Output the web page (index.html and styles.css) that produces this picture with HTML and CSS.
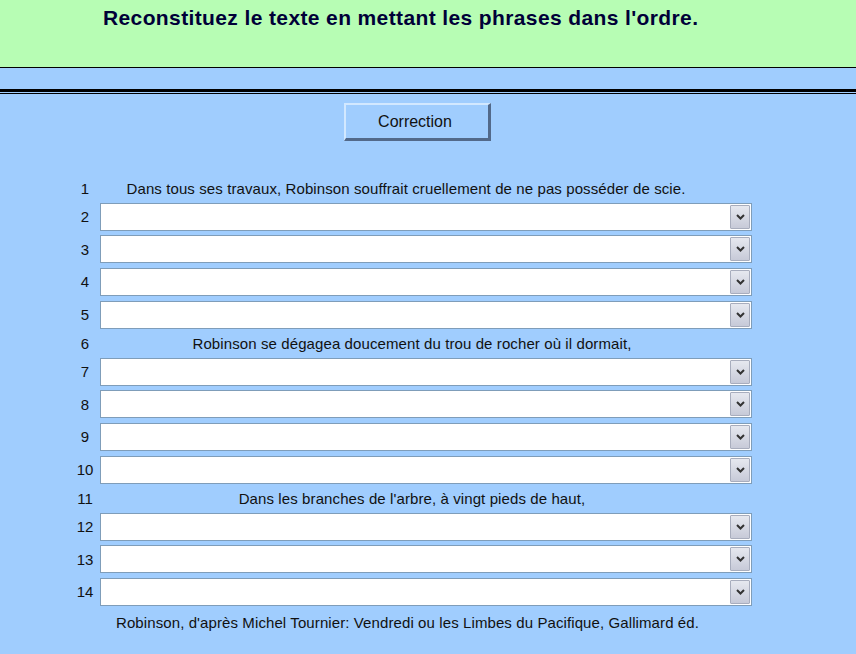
FILE: index.html
```html
<!DOCTYPE html>
<html lang="fr">
<head>
<meta charset="utf-8">
<title>Reconstituez le texte</title>
<link rel="stylesheet" href="styles.css">
</head>
<body>
<header class="top">
  <h1 class="title">Reconstituez le texte en mettant les phrases dans l'ordre.</h1>
</header>
<div class="band"></div>
<div class="double-rule"></div>
<div class="actions">
  <button class="btn" type="button">Correction</button>
</div>
<main class="rows">
  <div class="row txt"><span class="num">1</span><span class="phrase p1">Dans tous ses travaux, Robinson souffrait cruellement de ne pas posséder de scie.</span></div>
  <div class="row sel"><span class="num">2</span><div class="combo"><span class="arrow"><svg width="9" height="6" viewBox="0 0 9 6"><path d="M1 1 L4.5 4.5 L8 1" fill="none" stroke="#333" stroke-width="2"/></svg></span></div></div>
  <div class="row sel"><span class="num">3</span><div class="combo"><span class="arrow"><svg width="9" height="6" viewBox="0 0 9 6"><path d="M1 1 L4.5 4.5 L8 1" fill="none" stroke="#333" stroke-width="2"/></svg></span></div></div>
  <div class="row sel"><span class="num">4</span><div class="combo"><span class="arrow"><svg width="9" height="6" viewBox="0 0 9 6"><path d="M1 1 L4.5 4.5 L8 1" fill="none" stroke="#333" stroke-width="2"/></svg></span></div></div>
  <div class="row sel"><span class="num">5</span><div class="combo"><span class="arrow"><svg width="9" height="6" viewBox="0 0 9 6"><path d="M1 1 L4.5 4.5 L8 1" fill="none" stroke="#333" stroke-width="2"/></svg></span></div></div>
  <div class="row txt"><span class="num">6</span><span class="phrase">Robinson se dégagea doucement du trou de rocher où il dormait,</span></div>
  <div class="row sel"><span class="num">7</span><div class="combo"><span class="arrow"><svg width="9" height="6" viewBox="0 0 9 6"><path d="M1 1 L4.5 4.5 L8 1" fill="none" stroke="#333" stroke-width="2"/></svg></span></div></div>
  <div class="row sel"><span class="num">8</span><div class="combo"><span class="arrow"><svg width="9" height="6" viewBox="0 0 9 6"><path d="M1 1 L4.5 4.5 L8 1" fill="none" stroke="#333" stroke-width="2"/></svg></span></div></div>
  <div class="row sel"><span class="num">9</span><div class="combo"><span class="arrow"><svg width="9" height="6" viewBox="0 0 9 6"><path d="M1 1 L4.5 4.5 L8 1" fill="none" stroke="#333" stroke-width="2"/></svg></span></div></div>
  <div class="row sel"><span class="num">10</span><div class="combo"><span class="arrow"><svg width="9" height="6" viewBox="0 0 9 6"><path d="M1 1 L4.5 4.5 L8 1" fill="none" stroke="#333" stroke-width="2"/></svg></span></div></div>
  <div class="row txt"><span class="num">11</span><span class="phrase">Dans les branches de l'arbre, à vingt pieds de haut,</span></div>
  <div class="row sel"><span class="num">12</span><div class="combo"><span class="arrow"><svg width="9" height="6" viewBox="0 0 9 6"><path d="M1 1 L4.5 4.5 L8 1" fill="none" stroke="#333" stroke-width="2"/></svg></span></div></div>
  <div class="row sel"><span class="num">13</span><div class="combo"><span class="arrow"><svg width="9" height="6" viewBox="0 0 9 6"><path d="M1 1 L4.5 4.5 L8 1" fill="none" stroke="#333" stroke-width="2"/></svg></span></div></div>
  <div class="row sel"><span class="num">14</span><div class="combo"><span class="arrow"><svg width="9" height="6" viewBox="0 0 9 6"><path d="M1 1 L4.5 4.5 L8 1" fill="none" stroke="#333" stroke-width="2"/></svg></span></div></div>
  <div class="row txt"><span class="num"></span><span class="phrase credit">Robinson, d'après Michel Tournier: Vendredi ou les Limbes du Pacifique, Gallimard éd.</span></div>
</main>
</body>
</html>
```
FILE: styles.css
```css
html, body {
  margin: 0;
  padding: 0;
}
body {
  background: #a0cdfe;
  font-family: "Liberation Sans", Arial, sans-serif;
  color: #111;
  height: 654px;
  overflow: hidden;
}
.top {
  background: #b7fdb4;
  height: 67px;
  border-bottom: 1px solid #000;
  box-sizing: content-box;
}
.title {
  margin: 0;
  padding: 6px 0 0 103px;
  font-size: 21px;
  line-height: 24px;
  font-weight: bold;
  letter-spacing: 0.38px;
  color: #000038;
}
.band {
  height: 21px;
}
.double-rule {
  height: 1px;
  border-top: 3px solid #000;
  border-bottom: 1px solid #000;
}
.actions {
  padding-top: 9px;
  padding-left: 344px;
}
.btn {
  display: block;
  width: 147px;
  height: 38px;
  margin: 0;
  padding: 0 4px 0 0;
  background: #a0cdfe;
  border-style: solid;
  border-width: 2px 3px 3px 2px;
  border-color: #d2e8ff #52698a #52698a #d2e8ff;
  font-family: "Liberation Sans", Arial, sans-serif;
  font-size: 16px;
  color: #111;
}
.rows {
  margin-top: 35px;
  display: flex;
  flex-direction: column;
}
.row {
  display: grid;
  grid-template-columns: 100px 652px;
  align-items: center;
}
.row.sel {
  height: 32.67px;
}
.row.txt {
  height: 24.33px;
}
.num {
  font-size: 15px;
  text-align: center;
  padding-left: 70px;
  width: 30px;
  box-sizing: content-box;
}
.phrase {
  font-size: 15px;
  text-align: center;
  padding-right: 28px;
  letter-spacing: 0.1px;
  white-space: nowrap;
}
.phrase.p1 {
  padding-right: 40px;
}
.phrase.credit {
  margin-left: -37px;
  padding-right: 0;
  padding-top: 5px;
}
.combo {
  height: 28px;
  box-sizing: border-box;
  background: #fff;
  border: 1px solid #7f9db9;
  display: flex;
  justify-content: flex-end;
  padding: 1px;
}
.arrow {
  width: 20px;
  box-sizing: border-box;
  border: 1px solid #a8adbd;
  border-radius: 1px;
  background: linear-gradient(#e6e8ef, #c7cad8);
  display: flex;
  align-items: center;
  justify-content: center;
}
.arrow svg {
  display: block;
}
```
